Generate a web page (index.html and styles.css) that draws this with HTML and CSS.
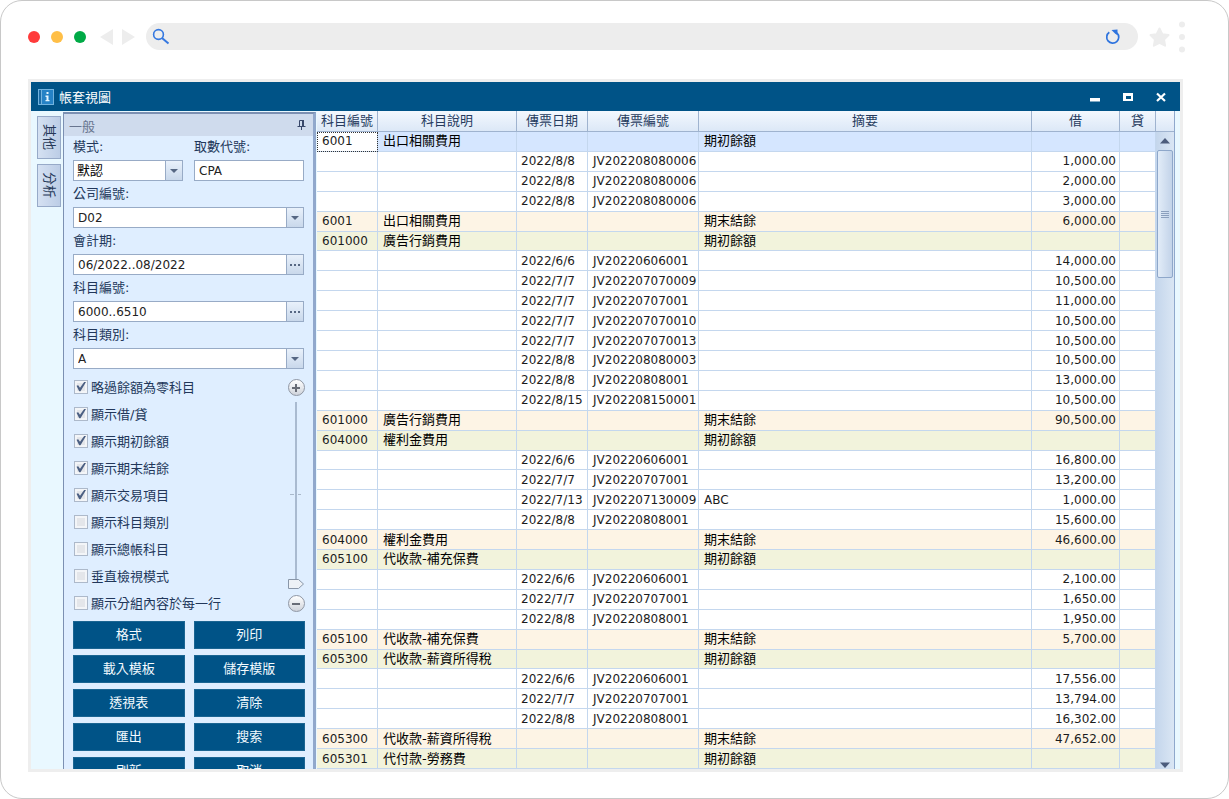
FILE: index.html
```html
<!DOCTYPE html>
<html lang="zh-Hant">
<head>
<meta charset="utf-8">
<title>帳套視圖</title>
<link rel="stylesheet" href="styles.css">
</head>
<body>
<div class="browser">
  <header class="toolbar">
    <span class="dot red"></span><span class="dot amber"></span><span class="dot green"></span>
    <svg class="nav" width="35" height="16" viewBox="0 0 35 16"><path d="M0 8 13 0v16zM35 8 22 0v16z" fill="#ededed"/></svg>
    <div class="address">
      <svg width="18" height="18" viewBox="0 0 18 18" fill="none" stroke="#3578e0"><circle cx="6.500" cy="6.500" r="4.900" stroke-width="1.600"/><path d="M10 10l6.500 5.500" stroke-width="2"/></svg>
      <input class="url" type="text" aria-label="網址">
      <svg width="16" height="16" viewBox="0 0 16 16" fill="none"><path d="M4.300 3.200A6 6 0 1 0 11.900 3.800" stroke="#2f74de" stroke-width="1.700"/><path d="M6.500 1 12.500.6v5.600L10 4.600z" fill="#2f74de"/></svg>
    </div>
    <svg class="star" width="21" height="20" viewBox="0 0 21 20"><path d="M10.500 1.500l2.800 5.700 6.200.9-4.500 4.400 1.100 6.200-5.600-2.900-5.600 2.900L6 12.500 1.500 8.100l6.200-.9z" fill="#ededed" stroke="#ededed" stroke-width="2" stroke-linejoin="round"/></svg>
    <svg class="more" width="6" height="32" viewBox="0 0 6 32" fill="#ededed"><circle cx="3" cy="3.500" r="3"/><circle cx="3" cy="16" r="3"/><circle cx="3" cy="28.500" r="3"/></svg>
  </header>

  <main class="window">
    <div class="titlebar">
      <svg width="16" height="16" viewBox="0 0 16 16"><path d="M0 0h16v16H0z" fill="#72b3df"/><path d="M1 1h2v14H1z" fill="#1c6ba5"/><path d="M4 1h11v14H4z" fill="#2582c6"/><path d="M8.500 3h2v2h-2zM7.500 6.500h3V11h1v1.300h-4V11h1V8h-1z" fill="#e4f5ff"/></svg>
      <h1>帳套視圖</h1>
      <button class="wbtn" aria-label="最小化"><svg width="12" height="12" viewBox="0 0 12 12"><path d="M1 7h10v3.500H1z" fill="#fff"/></svg></button>
      <button class="wbtn" aria-label="最大化"><svg width="12" height="12" viewBox="0 0 12 12"><path d="M1 2h10v8H1zM4 5v3h5V5z" fill="#fff" fill-rule="evenodd"/></svg></button>
      <button class="wbtn" aria-label="關閉"><svg width="12" height="12" viewBox="0 0 12 12"><path d="M2 2.500l8 7.500M10 2.500L2 10" stroke="#fff" stroke-width="2.200"/></svg></button>
    </div>
    <div class="content">
      <nav class="tabs"><button class="tab">其他</button><button class="tab">分析</button></nav>

      <aside class="panel">
        <div class="panel-head"><h2>一般</h2>
          <svg width="9" height="12" viewBox="0 0 9 12" fill="none" stroke="#38486a"><path d="M2.500 7V1.500h4M.5 7.500h8M4.500 7v4"/><path d="M6 1v6" stroke-width="2"/></svg></div>
        <form class="form">
          <div class="pair">
            <div class="field"><label for="mode">模式:</label><div class="combo"><select id="mode"><option>默認</option></select><span class="arrow"></span></div></div>
            <div class="field"><label for="code">取數代號:</label><input class="text" id="code" value="CPA"></div>
          </div>
          <div class="field"><label for="company">公司編號:</label><div class="combo"><select id="company"><option>D02</option></select><span class="arrow"></span></div></div>
          <div class="field"><label for="period">會計期:</label><div class="lookup"><input class="text" id="period" value="06/2022..08/2022"><button type="button" class="pick" aria-label="選擇會計期"><i></i><i></i><i></i></button></div></div>
          <div class="field"><label for="account">科目編號:</label><div class="lookup"><input class="text" id="account" value="6000..6510"><button type="button" class="pick" aria-label="選擇科目"><i></i><i></i><i></i></button></div></div>
          <div class="field"><label for="category">科目類別:</label><div class="combo"><select id="category"><option>A</option></select><span class="arrow"></span></div></div>

          <div class="options">
            <div class="checks">
              <label><input type="checkbox" checked>略過餘額為零科目</label>
              <label><input type="checkbox" checked>顯示借/貸</label>
              <label><input type="checkbox" checked>顯示期初餘額</label>
              <label><input type="checkbox" checked>顯示期末結餘</label>
              <label><input type="checkbox" checked>顯示交易項目</label>
              <label><input type="checkbox">顯示科目類別</label>
              <label><input type="checkbox">顯示總帳科目</label>
              <label><input type="checkbox">垂直檢視模式</label>
              <label><input type="checkbox">顯示分組內容於每一行</label>
            </div>
            <div class="zoom">
              <button type="button" class="round" aria-label="放大"><svg width="10" height="10" viewBox="0 0 10 10"><path d="M1 5h8M5 1v8" stroke="#686c76" stroke-width="2"/></svg></button>
              <div class="track">
                <svg width="16" height="190" viewBox="0 0 16 190"><path d="M7 1h2v178H7z" fill="#a9bad0"/><path d="M2 93.500h4M10 93.500h3" stroke="#a9b8ca"/><path d="M.5 178.500h10l5 4.500-5 4.500H.5z" fill="#edf1f6" stroke="#8996a8"/></svg>
                <input type="range" min="0" max="100" value="0" aria-label="縮放">
              </div>
              <button type="button" class="round" aria-label="縮小"><svg width="10" height="10" viewBox="0 0 10 10"><path d="M1 5h8" stroke="#686c76" stroke-width="2"/></svg></button>
            </div>
          </div>

          <div class="actions">
            <button type="button">格式</button><button type="button">列印</button>
            <button type="button">載入模板</button><button type="button">儲存模版</button>
            <button type="button">透視表</button><button type="button">清除</button>
            <button type="button">匯出</button><button type="button">搜索</button>
            <button type="button">刷新</button><button type="button">取消</button>
          </div>
        </form>
      </aside>

      <section class="grid">
        <table>
          <colgroup><col class="c-acc"><col class="c-name"><col class="c-date"><col class="c-no"><col><col class="c-debit"><col class="c-credit"></colgroup>
          <thead><tr><th>科目編號</th><th>科目說明</th><th>傳票日期</th><th>傳票編號</th><th>摘要</th><th>借</th><th>貸</th></tr></thead>
          <tbody>
            <tr class="selected"><td class="focus">6001</td><td class="zh">出口相關費用</td><td></td><td></td><td class="zh">期初餘額</td><td></td><td></td></tr>
            <tr><td></td><td></td><td>2022/8/8</td><td>JV202208080006</td><td></td><td>1,000.00</td><td></td></tr>
            <tr><td></td><td></td><td>2022/8/8</td><td>JV202208080006</td><td></td><td>2,000.00</td><td></td></tr>
            <tr><td></td><td></td><td>2022/8/8</td><td>JV202208080006</td><td></td><td>3,000.00</td><td></td></tr>
            <tr class="close"><td>6001</td><td class="zh">出口相關費用</td><td></td><td></td><td class="zh">期末結餘</td><td>6,000.00</td><td></td></tr>
            <tr class="open"><td>601000</td><td class="zh">廣告行銷費用</td><td></td><td></td><td class="zh">期初餘額</td><td></td><td></td></tr>
            <tr><td></td><td></td><td>2022/6/6</td><td>JV20220606001</td><td></td><td>14,000.00</td><td></td></tr>
            <tr><td></td><td></td><td>2022/7/7</td><td>JV202207070009</td><td></td><td>10,500.00</td><td></td></tr>
            <tr><td></td><td></td><td>2022/7/7</td><td>JV20220707001</td><td></td><td>11,000.00</td><td></td></tr>
            <tr><td></td><td></td><td>2022/7/7</td><td>JV202207070010</td><td></td><td>10,500.00</td><td></td></tr>
            <tr><td></td><td></td><td>2022/7/7</td><td>JV202207070013</td><td></td><td>10,500.00</td><td></td></tr>
            <tr><td></td><td></td><td>2022/8/8</td><td>JV202208080003</td><td></td><td>10,500.00</td><td></td></tr>
            <tr><td></td><td></td><td>2022/8/8</td><td>JV20220808001</td><td></td><td>13,000.00</td><td></td></tr>
            <tr><td></td><td></td><td>2022/8/15</td><td>JV202208150001</td><td></td><td>10,500.00</td><td></td></tr>
            <tr class="close"><td>601000</td><td class="zh">廣告行銷費用</td><td></td><td></td><td class="zh">期末結餘</td><td>90,500.00</td><td></td></tr>
            <tr class="open"><td>604000</td><td class="zh">權利金費用</td><td></td><td></td><td class="zh">期初餘額</td><td></td><td></td></tr>
            <tr><td></td><td></td><td>2022/6/6</td><td>JV20220606001</td><td></td><td>16,800.00</td><td></td></tr>
            <tr><td></td><td></td><td>2022/7/7</td><td>JV20220707001</td><td></td><td>13,200.00</td><td></td></tr>
            <tr><td></td><td></td><td>2022/7/13</td><td>JV202207130009</td><td>ABC</td><td>1,000.00</td><td></td></tr>
            <tr><td></td><td></td><td>2022/8/8</td><td>JV20220808001</td><td></td><td>15,600.00</td><td></td></tr>
            <tr class="close"><td>604000</td><td class="zh">權利金費用</td><td></td><td></td><td class="zh">期末結餘</td><td>46,600.00</td><td></td></tr>
            <tr class="open"><td>605100</td><td class="zh">代收款-補充保費</td><td></td><td></td><td class="zh">期初餘額</td><td></td><td></td></tr>
            <tr><td></td><td></td><td>2022/6/6</td><td>JV20220606001</td><td></td><td>2,100.00</td><td></td></tr>
            <tr><td></td><td></td><td>2022/7/7</td><td>JV20220707001</td><td></td><td>1,650.00</td><td></td></tr>
            <tr><td></td><td></td><td>2022/8/8</td><td>JV20220808001</td><td></td><td>1,950.00</td><td></td></tr>
            <tr class="close"><td>605100</td><td class="zh">代收款-補充保費</td><td></td><td></td><td class="zh">期末結餘</td><td>5,700.00</td><td></td></tr>
            <tr class="open"><td>605300</td><td class="zh">代收款-薪資所得稅</td><td></td><td></td><td class="zh">期初餘額</td><td></td><td></td></tr>
            <tr><td></td><td></td><td>2022/6/6</td><td>JV20220606001</td><td></td><td>17,556.00</td><td></td></tr>
            <tr><td></td><td></td><td>2022/7/7</td><td>JV20220707001</td><td></td><td>13,794.00</td><td></td></tr>
            <tr><td></td><td></td><td>2022/8/8</td><td>JV20220808001</td><td></td><td>16,302.00</td><td></td></tr>
            <tr class="close"><td>605300</td><td class="zh">代收款-薪資所得稅</td><td></td><td></td><td class="zh">期末結餘</td><td>47,652.00</td><td></td></tr>
            <tr class="open"><td>605301</td><td class="zh">代付款-勞務費</td><td></td><td></td><td class="zh">期初餘額</td><td></td><td></td></tr>
          </tbody>
        </table>
        <div class="side">
          <div class="corner"></div>
          <div class="scroll">
            <button class="sbtn" aria-label="向上"><svg width="10" height="6" viewBox="0 0 10 6"><path d="M0 5.500 5 0l5 5.500z" fill="#4c5c7c"/></svg></button>
            <div class="rail"><div class="thumb"><i></i><i></i><i></i><i></i></div></div>
            <button class="sbtn down" aria-label="向下"><svg width="10" height="6" viewBox="0 0 10 6"><path d="M0 .5h10L5 6z" fill="#4c5c7c"/></svg></button>
          </div>
        </div>
      </section>
    </div>
  </main>
</div>
</body>
</html>
```
FILE: styles.css
```css
* { box-sizing: border-box; }

body {
  margin: 0;
  background: #fff;
  font-family: "DejaVu Sans", "Noto Sans CJK TC", sans-serif;
  font-size: 12px;
  color: #1c1c1c;
}

button, input, select { font: inherit; color: inherit; margin: 0; padding: 0; border: 0; }
h1, h2 { margin: 0; font-size: 13px; font-weight: 400; }

.browser {
  height: 100vh;
  display: flex;
  flex-direction: column;
  border: 1px solid #c8c8c8;
  border-radius: 22px;
  padding: 20px 45px 26px 27px;
  overflow: hidden;
}

/* Browser toolbar */
.toolbar { display: flex; align-items: center; height: 31px; margin-right: -4px; }
.dot { width: 12px; height: 12px; border-radius: 50%; margin-right: 11px; }
.red { background: #ff3b3b; }
.amber { background: #ffbf47; }
.green { background: #00aa46; }
.nav { margin: 0 11px 0 3px; }
.address {
  flex: 1;
  display: flex;
  align-items: center;
  height: 27px;
  padding: 0 17px 0 6px;
  border-radius: 14px;
  background: #ededed;
}
.url { flex: 1; min-width: 0; background: transparent; outline: none; }
.star { margin: 0 9px 0 11px; }
.more { margin-right: 2px; }

/* Application window */
.window {
  flex: 1;
  min-height: 0;
  margin-top: 27px;
  display: flex;
  flex-direction: column;
  border: 3px solid #eee;
}
.titlebar {
  display: flex;
  align-items: center;
  height: 29px;
  flex: none;
  padding: 0 8px 0 7px;
  background: #005387;
  color: #fff;
}
.titlebar h1 { flex: 1; margin-left: 5px; }
.wbtn { width: 22px; height: 22px; margin-left: 11px; background: none; display: grid; place-items: center; }
.content { flex: 1; min-height: 0; display: flex; background: #e9f8ff; padding-right: 5px; }

.tabs { width: 30px; flex: none; padding: 5px 0 0 6px; display: flex; flex-direction: column; gap: 5px; }
.tab {
  height: 43px;
  border: 1px solid #97aac8;
  background: linear-gradient(90deg, #d5e1f2, #bccde6);
  color: #263858;
  writing-mode: vertical-rl;
  text-orientation: sideways;
  font-size: 13px;
  line-height: 22px;
  text-align: center;
}

.panel {
  width: 253px;
  flex: none;
  margin-top: 1px;
  margin-left: 2px;
  border: 1px solid #7c90b2;
  border-width: 2px 3px 0 1px;
  border-right-color: #91a8cc;
  background: #dfeeff;
  overflow: hidden;
}
.panel-head {
  display: flex;
  align-items: center;
  justify-content: space-between;
  height: 22px;
  padding: 0 7px 0 5px;
  background: #cfdbed;
  color: #68758f;
}
.form { padding: 0 8px 0 9px; color: #22375a; }
.pair { display: grid; grid-template-columns: 1fr 1fr; gap: 11px; padding-right: 1px; }
.form > .field { padding-right: 1px; }
.field > label { display: block; height: 26px; line-height: 24px; padding-top: 1px; font-size: 13px; }
.pair label { height: 24px; line-height: 22px; padding: 0; }
.text, select {
  width: 100%;
  height: 21px;
  padding: 0 4px;
  border: 1px solid #98abc6;
  border-radius: 0;
  background: #fff;
  color: #222;
  display: block;
  appearance: none;
  outline: none;
}
#mode { font-size: 13px; color: #000; padding-left: 3px; }
.combo { position: relative; }
.arrow {
  position: absolute;
  inset: 0 0 0 auto;
  width: 18px;
  border: 1px solid #98abc6;
  background: linear-gradient(#e9f1fb, #c9d8eb);
  pointer-events: none;
  display: grid;
  place-items: center;
}
.arrow::before { content: ""; border: 4px solid transparent; border-top-color: #566783; border-bottom: 0; }
.lookup { display: flex; }
.lookup .text { flex: 1; min-width: 0; border-right: 0; }
.pick {
  width: 18px;
  border: 1px solid #98abc6;
  background: linear-gradient(#e9f1fb, #c9d8eb);
  display: flex;
  align-items: center;
  justify-content: center;
  gap: 2px;
}
.pick i { width: 2px; height: 2px; background: #566783; }

.options { display: flex; justify-content: space-between; margin-top: 4px; }
.checks { font-size: 13px; }
.checks label { display: flex; align-items: center; gap: 3px; height: 27px; padding-left: 1px; white-space: nowrap; }
.checks input {
  appearance: none;
  width: 14px;
  height: 14px;
  border: 1px solid #adb9ca;
  background: #e4e6ea;
  box-shadow: inset 0 0 0 2px #f3f5f8;
  display: grid;
  place-items: center;
}
.checks input:checked::before {
  content: "";
  width: 10px;
  height: 10px;
  background: #4c6083;
  clip-path: polygon(5% 42%, 22% 38%, 40% 62%, 85% 0, 100% 5%, 45% 98%, 32% 98%);
}
.zoom { width: 18px; padding: 6px 0 4px; display: flex; flex-direction: column; align-items: center; justify-content: space-between; }
.round {
  width: 17px;
  height: 17px;
  border: 1px solid #8f96a3;
  border-radius: 50%;
  background: linear-gradient(#fff, #cfd3db);
  display: grid;
  place-items: center;
}
.track { position: relative; height: 190px; }
.track svg { display: block; }
.track input { position: absolute; inset: 0; width: 16px; height: 190px; writing-mode: vertical-lr; direction: rtl; opacity: 0; }

.actions { display: grid; grid-template-columns: 1fr 1fr; gap: 6px 9px; margin-top: 5px; }
.actions button { height: 28px; background: #005387; color: #f4fbff; border: 1px solid #1b6592; font-size: 13px; line-height: 26px; }

/* Ledger */
.grid { flex: 1; min-width: 0; display: flex; margin-left: 1px; border-right: 1px solid #8fa8cc; }
table { flex: 1; min-width: 0; height: 100%; table-layout: fixed; border-collapse: separate; border-spacing: 0; background: #fff; }
.c-acc { width: 61px; }
.c-name { width: 139px; }
.c-date { width: 71px; }
.c-no { width: 111px; }
.c-debit { width: 88px; }
.c-credit { width: 36px; }
th {
  height: 21px;
  padding: 0;
  font-size: 13px;
  font-weight: 400;
  line-height: 16px;
  color: #263b5e;
  background: linear-gradient(#f3f8fe, #dce8f7);
  border-right: 1px solid #9fb3cf;
  border-bottom: 1px solid #9fb3cf;
}
td {
  padding: 0 0 0 5px;
  line-height: 16px;
  white-space: nowrap;
  border-right: 1px solid #c4d7ee;
  border-bottom: 1px solid #c4d7ee;
}
td:nth-child(3) { padding-left: 4px; }
td:nth-child(6) { text-align: right; padding-right: 3px; }
.zh { font-size: 13px; color: #000; }
.selected td { background: #d5e6ff; }
.close td { background: #fdf4e5; }
.open td { background: #f2f3dc; }
.selected .focus { background: #fff; outline: 1px dotted #333; outline-offset: -1px; }

.side { width: 18px; flex: none; display: flex; flex-direction: column; }
.corner { height: 21px; background: linear-gradient(#f3f8fe, #dce8f7); border-bottom: 1px solid #9fb3cf; }
.scroll { flex: 1; display: flex; flex-direction: column; background: linear-gradient(90deg, #c4d6ec, #dae6f4); }
.sbtn { height: 18px; background: none; display: grid; place-items: center; }
.down { height: 8px; }
.rail { flex: 1; }
.thumb {
  height: 21%;
  margin: 0 1px;
  border: 1px solid #8ea7ca;
  border-radius: 2px;
  background: linear-gradient(90deg, #e2ecf8, #c2d3e9);
  display: flex;
  flex-direction: column;
  align-items: center;
  justify-content: center;
  gap: 1px;
}
.thumb i { width: 8px; height: 1px; background: #8b9fbd; }
```
